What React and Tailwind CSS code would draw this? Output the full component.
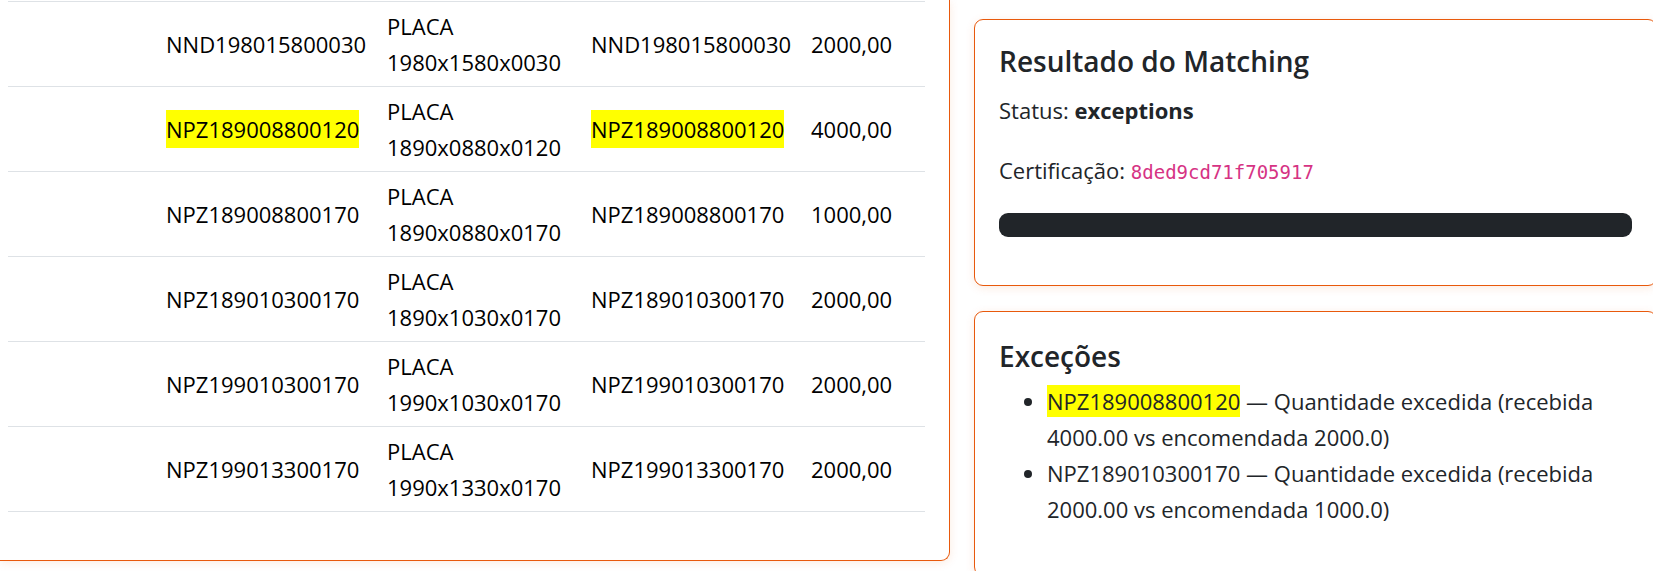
import React from 'react';

const rows = [
  { code: 'NND198015800030', desc: '1980x1580x0030', qty: '2000,00' },
  { code: 'NPZ189008800120', desc: '1890x0880x0120', qty: '4000,00', flag: true },
  { code: 'NPZ189008800170', desc: '1890x0880x0170', qty: '1000,00' },
  { code: 'NPZ189010300170', desc: '1890x1030x0170', qty: '2000,00' },
  { code: 'NPZ199010300170', desc: '1990x1030x0170', qty: '2000,00' },
  { code: 'NPZ199013300170', desc: '1990x1330x0170', qty: '2000,00' },
];

const exceptions = [
  { code: 'NPZ189008800120', msg: 'Quantidade excedida (recebida 4000.00 vs encomendada 2000.0)', flag: true },
  { code: 'NPZ189010300170', msg: 'Quantidade excedida (recebida 2000.00 vs encomendada 1000.0)' },
];

const Code = ({ children, flag }) =>
  flag ? <mark className="bg-[#ffff00] text-inherit py-px">{children}</mark> : <span>{children}</span>;

const App = () => {
  return (
    <div
      className="flex gap-6 h-[571px] overflow-hidden bg-white text-[#212529] text-[22px] leading-[36px]"
      style={{ fontFamily: '"Open Sans", sans-serif' }}
    >
      {/* items table card (scrolled, top is off screen) */}
      <div className="w-[950px] shrink-0 self-start pl-2 pr-6 pb-6 border-r border-b border-[#e8590c] rounded-br-[9px] shadow-[0_2px_10px_rgba(232,89,12,0.12)]">
        <div className="h-px" />
        <div className="border-t border-[#dee2e6] mb-6 text-black">
          {rows.map((r) => (
            <div
              key={r.code}
              className="grid grid-cols-[152px_221px_204px_220px_1fr] border-b border-[#dee2e6]"
            >
              <div className="py-[6px] px-[6px]" />
              <div className="py-[6px] px-[6px] flex items-center">
                <Code flag={r.flag}>{r.code}</Code>
              </div>
              <div className="py-[6px] px-[6px]">
                PLACA
                <br />
                {r.desc}
              </div>
              <div className="py-[6px] px-[6px] flex items-center">
                <Code flag={r.flag}>{r.code}</Code>
              </div>
              <div className="py-[6px] px-[6px] flex items-center">{r.qty}</div>
            </div>
          ))}
        </div>
      </div>

      {/* right column */}
      <div className="w-[683px] shrink-0 pt-[19px] flex flex-col gap-[25px]">
        <div className="bg-white border border-[#e8590c] rounded-[9px] px-6 pt-[25px] pb-[24px] shadow-[0_2px_10px_rgba(232,89,12,0.12)]">
          <h5 className="text-[28px] leading-[1.2] font-semibold mb-[13px]">Resultado do Matching</h5>
          <p className="mb-6">
            Status: <strong className="font-bold">exceptions</strong>
          </p>
          <p className="mb-[23px]">
            Certificação:{' '}
            <code
              className="text-[19px] text-[#d63384]"
              style={{ fontFamily: '"DejaVu Sans Mono", monospace' }}
            >
              8ded9cd71f705917
            </code>
          </p>
          <div className="h-6 rounded-[9px] bg-[#212529] mb-6" />
        </div>

        <div className="bg-white border border-[#e8590c] rounded-[9px] px-6 pt-[28px] pb-12 shadow-[0_2px_10px_rgba(232,89,12,0.12)]">
          <h5 className="text-[28px] leading-[1.2] font-semibold mb-[10px]">Exceções</h5>
          <ul className="list-disc pl-12">
            {exceptions.map((e) => (
              <li key={e.code}>
                <Code flag={e.flag}>{e.code}</Code> — {e.msg}
              </li>
            ))}
          </ul>
        </div>
      </div>
    </div>
  );
};

export default App;
